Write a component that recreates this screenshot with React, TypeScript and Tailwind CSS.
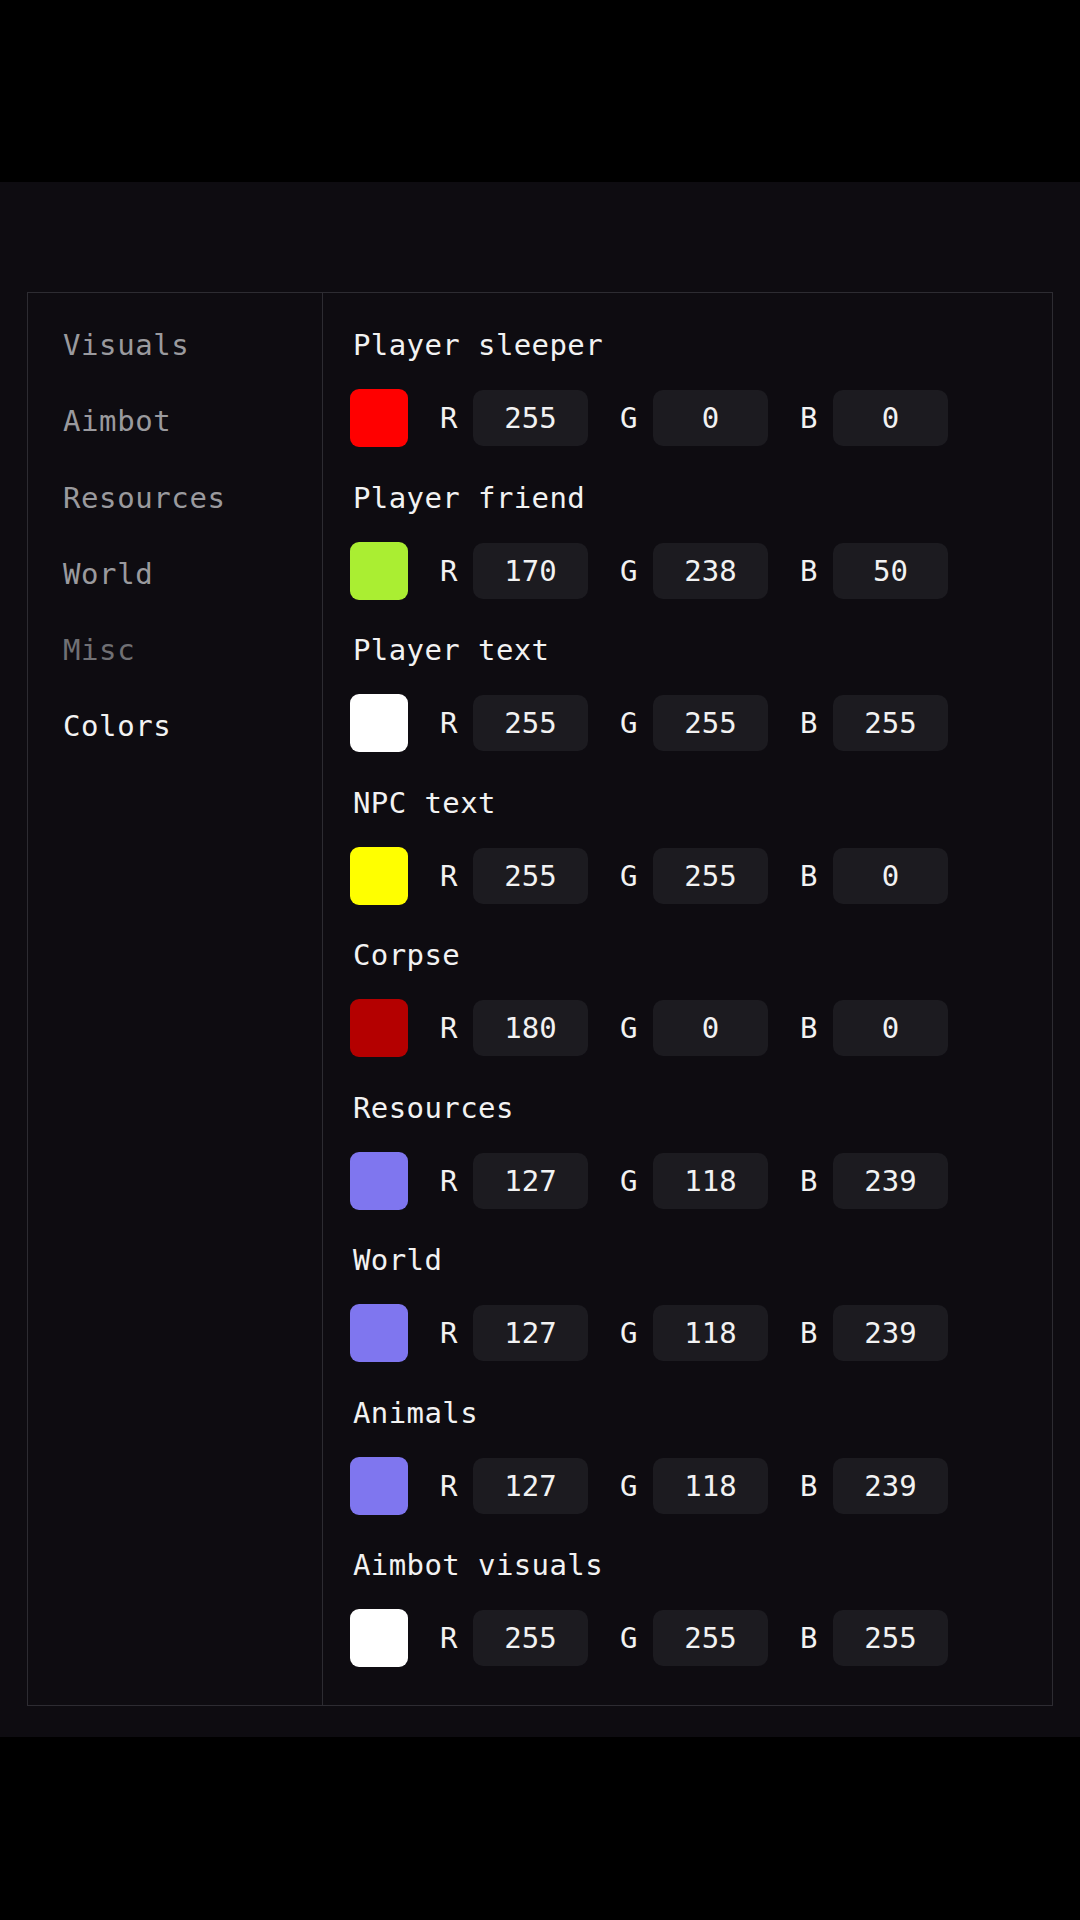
import React from 'react';

type ColorEntry = {
  name: string;
  rgb: [number, number, number];
};

const tabs = [
  { label: 'Visuals', tone: 'text-[#9a9a9e]' },
  { label: 'Aimbot', tone: 'text-[#9a9a9e]' },
  { label: 'Resources', tone: 'text-[#9a9a9e]' },
  { label: 'World', tone: 'text-[#9a9a9e]' },
  { label: 'Misc', tone: 'text-[#707074]' },
  { label: 'Colors', tone: 'text-[#f2f2f2]' },
];

const colors: ColorEntry[] = [
  { name: 'Player sleeper', rgb: [255, 0, 0] },
  { name: 'Player friend', rgb: [170, 238, 50] },
  { name: 'Player text', rgb: [255, 255, 255] },
  { name: 'NPC text', rgb: [255, 255, 0] },
  { name: 'Corpse', rgb: [180, 0, 0] },
  { name: 'Resources', rgb: [127, 118, 239] },
  { name: 'World', rgb: [127, 118, 239] },
  { name: 'Animals', rgb: [127, 118, 239] },
  { name: 'Aimbot visuals', rgb: [255, 255, 255] },
];

function Channel({ label, value }: { label: string; value: number }) {
  return (
    <div className="flex items-center gap-[15px]">
      <span className="w-[18px] text-[#f2f2f2]">{label}</span>
      <div className="flex h-[56px] w-[115px] items-center justify-center rounded-[10px] bg-[#1c1b20] text-[#f2f2f2]">
        {value}
      </div>
    </div>
  );
}

function ColorRow({ entry }: { entry: ColorEntry }) {
  const [r, g, b] = entry.rgb;
  return (
    <div className="flex flex-col">
      <div className="h-[36px] pl-[3px] leading-[36px] tracking-[0.4px] text-[#f2f2f2]">{entry.name}</div>
      <div className="mt-[26px] flex h-[58px] items-center gap-[32px]">
        <div
          className="h-[58px] w-[58px] rounded-[9px]"
          style={{ backgroundColor: `rgb(${r}, ${g}, ${b})` }}
        />
        <Channel label="R" value={r} />
        <Channel label="G" value={g} />
        <Channel label="B" value={b} />
      </div>
    </div>
  );
}

export default function App() {
  return (
    <div
      className="flex h-[1920px] w-[1080px] flex-col bg-black text-[29px] leading-[36px]"
      style={{ fontFamily: '"DejaVu Sans Mono", "Liberation Mono", monospace' }}
    >
      <div className="h-[182px] shrink-0" />
      <div className="h-[1555px] shrink-0 bg-[#0e0c11] px-[27px] pb-[31px] pt-[110px]">
        <div className="flex h-full border border-[#2d2c32]">
          <nav className="flex w-[295px] shrink-0 flex-col gap-[40.3px] border-r border-[#2d2c32] pl-[35px] pt-[34px] tracking-[0.6px]">
            {tabs.map((t) => (
              <div key={t.label} className={`h-[36px] ${t.tone}`}>
                {t.label}
              </div>
            ))}
          </nav>
          <div className="flex flex-1 flex-col gap-[32.5px] pl-[27px] pt-[34px]">
            {colors.map((c) => (
              <ColorRow key={c.name} entry={c} />
            ))}
          </div>
        </div>
      </div>
      <div className="flex-1 bg-black" />
    </div>
  );
}
